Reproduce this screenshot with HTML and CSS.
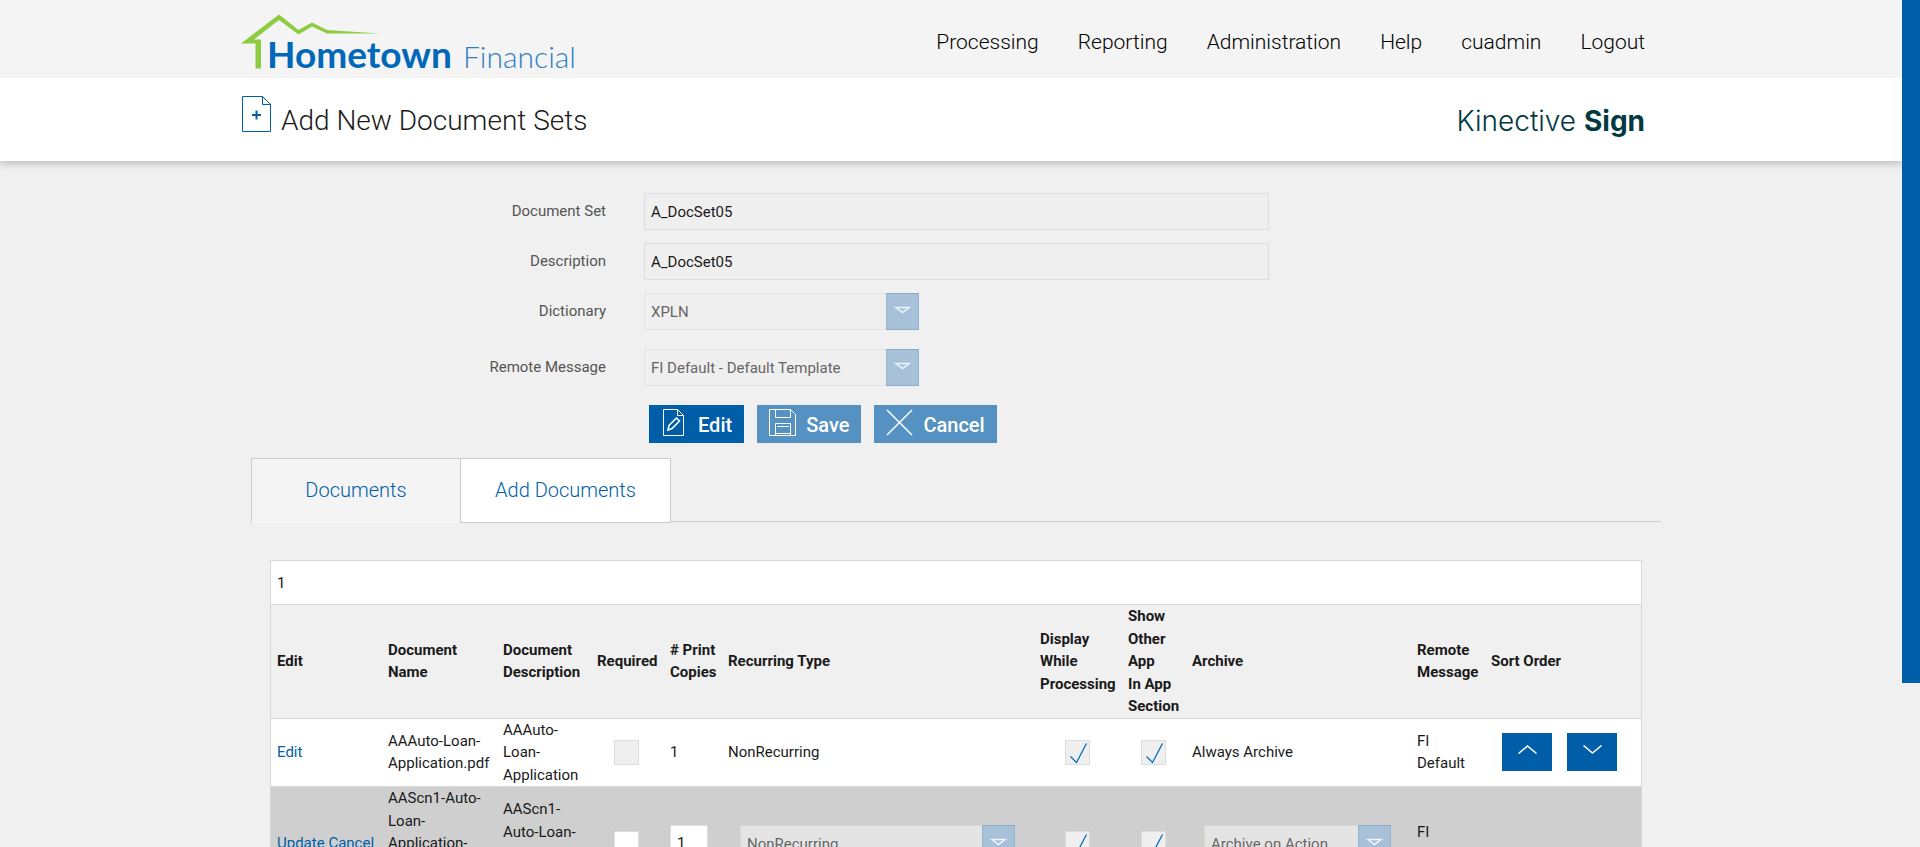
FILE: index.html
```html
<!DOCTYPE html>
<html lang="en">
<head>
<meta charset="utf-8">
<title>Add New Document Sets</title>
<link rel="stylesheet" href="styles.css">
</head>
<body>

<div class="page">

<header class="topbar">
  <div class="container topbar-inner">
    <a href="#" class="logo" aria-label="Hometown Financial">
      <svg width="340" height="69" viewBox="0 0 340 69">
        <path d="M0 34.500 L38 5.500 L57.500 21 L71 13.500 L86 21 L138 24.500 L86 24.500 L71 17.500 L57.500 25.500 L38 11 L13 30.500 L20 30.500 L20 59.500 L14.500 59.500 L14.500 34.500 Z" fill="#8dcb40"/>
        <text class="logo-main" x="26" y="59">Hometown</text>
        <text class="logo-sub" x="222" y="59">Financial</text>
      </svg>
    </a>
    <nav class="menu">
      <a href="#">Processing</a>
      <a href="#">Reporting</a>
      <a href="#">Administration</a>
      <a href="#">Help</a>
      <a href="#">cuadmin</a>
      <a href="#">Logout</a>
    </nav>
  </div>
</header>

<div class="titlebar">
  <div class="container titlebar-inner">
    <svg class="title-icon" width="30" height="37" viewBox="0 0 30 37" fill="none" stroke="#005ea8">
      <path d="M.5 .5 H20.500 L28.500 8.500 V35.500 H.5 Z M20.500 .5 V8.500 H28.500"/>
      <path d="M10 19 H19 M14.500 14.500 V23.500" stroke-width="2"/>
    </svg>
    <h1>Add New Document Sets</h1>
    <div class="brand">Kinective <b>Sign</b></div>
  </div>
</div>

<main class="container content">

  <form class="docset">
    <div class="row">
      <label for="docset">Document Set</label>
      <input type="text" id="docset" class="field wide" value="A_DocSet05" disabled>
    </div>
    <div class="row">
      <label for="description">Description</label>
      <input type="text" id="description" class="field wide" value="A_DocSet05" disabled>
    </div>
    <div class="row row-select">
      <label for="dictionary">Dictionary</label>
      <select id="dictionary" class="select" disabled><option>XPLN</option></select>
    </div>
    <div class="row row-select">
      <label for="remote">Remote Message</label>
      <select id="remote" class="select" disabled><option>FI Default - Default Template</option></select>
    </div>
    <div class="buttons">
      <button type="button" class="btn">
        <svg width="27" height="27" viewBox="-2 0 27 27" fill="none" stroke="#fff"><path d="M.5 .5 H14.500 L20.500 6.500 V26.500 H.5 Z M14.500 .5 V6.500 H20.500"/><path d="M5 21 L6 16.500 L13.500 9 L16.500 12 L9 19.500 Z" stroke-width="1.5"/></svg>
        Edit
      </button>
      <button type="button" class="btn" disabled>
        <svg width="27" height="27" viewBox="0 0 27 27" fill="none" stroke="#fff"><path d="M.5 .5 H21.500 L26.500 5.500 V26.500 H.5 Z M6.500 .5 V8.500 H21.500 V.5 M6.500 26.500 V14.500 H21.500 V26.500 M8.500 17.500 H19.500 M6.500 24.500 H21.500"/></svg>
        Save
      </button>
      <button type="button" class="btn" disabled>
        <svg width="27" height="27" viewBox="0 0 27 27" fill="none" stroke="#fff" stroke-width="1.5"><path d="M1 1 L26 26 M26 1 L1 26"/></svg>
        Cancel
      </button>
    </div>
  </form>

  <div class="tabs">
    <a href="#" class="tab current">Documents</a>
    <a href="#" class="tab">Add Documents</a>
  </div>

  <div class="grid">
    <div class="pager">1</div>
    <table>
      <colgroup>
        <col class="c-edit"><col class="c-name"><col class="c-desc"><col class="c-req"><col class="c-copies"><col>
        <col class="c-display"><col class="c-show"><col class="c-archive"><col class="c-remote"><col class="c-sort">
      </colgroup>
      <thead>
        <tr>
          <th>Edit</th>
          <th>Document Name</th>
          <th>Document Description</th>
          <th>Required</th>
          <th># Print Copies</th>
          <th>Recurring Type</th>
          <th>Display While Processing</th>
          <th>Show Other App<br>In App Section</th>
          <th>Archive</th>
          <th>Remote Message</th>
          <th>Sort Order</th>
        </tr>
      </thead>
      <tbody>
        <tr>
          <td><a href="#">Edit</a></td>
          <td>AAAuto-Loan-Application.pdf</td>
          <td>AAAuto-Loan-Application</td>
          <td class="mid"><input type="checkbox" aria-label="Required" disabled></td>
          <td>1</td>
          <td>NonRecurring</td>
          <td class="mid"><input type="checkbox" aria-label="Display While Processing" checked disabled></td>
          <td class="mid"><input type="checkbox" aria-label="Show Other App In App Section" checked disabled></td>
          <td>Always Archive</td>
          <td>FI Default</td>
          <td>
            <div class="sort">
              <button type="button" class="btn-sort" aria-label="Move up"><svg width="19" height="9" viewBox="0 0 19 9" fill="none" stroke="#fff" stroke-width="1.5"><path d="M.5 8.500 L9.500 1 L18.500 8.500"/></svg></button>
              <button type="button" class="btn-sort" aria-label="Move down"><svg width="19" height="9" viewBox="0 0 19 9" fill="none" stroke="#fff" stroke-width="1.5"><path d="M.5 .5 L9.500 8 L18.500 .5"/></svg></button>
            </div>
          </td>
        </tr>
        <tr class="editing">
          <td><a href="#">Update</a> <a href="#">Cancel</a></td>
          <td>AAScn1-Auto-Loan-Application-Screen-Test-1.pdf</td>
          <td>AAScn1-Auto-Loan-Application-Screen</td>
          <td class="mid"><input type="checkbox" aria-label="Required"></td>
          <td><input type="text" class="field copies" aria-label="Print copies" value="1"></td>
          <td><select class="select in-cell" aria-label="Recurring type" disabled><option>NonRecurring</option></select></td>
          <td class="mid"><input type="checkbox" aria-label="Display While Processing" checked disabled></td>
          <td class="mid"><input type="checkbox" aria-label="Show Other App In App Section" checked disabled></td>
          <td><select class="select in-cell archive" aria-label="Archive" disabled><option>Archive on Action</option></select></td>
          <td>FI Default</td>
          <td></td>
        </tr>
      </tbody>
    </table>
  </div>

</main>
</div>

<div class="scroll"><div class="scroll-thumb"></div></div>

</body>
</html>
```
FILE: styles.css
```css
* {
  box-sizing: border-box;
}

body {
  display: flex;
  height: 100vh;
  margin: 0;
  overflow: hidden;
  background: #f0f0f0;
  color: #1a1a1a;
  font: 15px/1.5 Roboto, sans-serif;
}

a {
  color: #005ea8;
  text-decoration: none;
}

.page {
  flex: 1;
  min-width: 0;
  overflow: hidden;
}

.container {
  max-width: 1420px;
  margin: 0 auto;
}

/* header */

.topbar {
  position: relative;
  z-index: 1;
  background: #f4f4f4;
}

.topbar-inner {
  display: flex;
  justify-content: space-between;
  align-items: center;
  height: 78px;
  padding-right: 16px;
}

.logo svg {
  display: block;
  margin-top: 9px;
}

.logo-main {
  font: bold 37px Lato, sans-serif;
  fill: #0067b9;
}

.logo-sub {
  font: 300 30px Lato, sans-serif;
  fill: #2f7fc1;
}

.menu {
  display: flex;
  gap: 39px;
  padding-top: 6px;
}

.menu a {
  color: #000;
  font-size: 21px;
  font-weight: 300;
  line-height: 28px;
}

.titlebar {
  background: #fff;
  box-shadow: 0 2px 8px rgba(0, 0, 0, .25);
}

.titlebar-inner {
  display: flex;
  align-items: center;
  height: 83px;
  padding: 2px 16px 0 0;
}

.title-icon {
  margin: 0 9px 12px 1px;
}

h1 {
  margin: 0;
  font-size: 28px;
  font-weight: 300;
  line-height: 36px;
}

.brand {
  margin-left: auto;
  color: #003a40;
  font: 300 28px/36px Inter, sans-serif;
}

.brand b {
  font-weight: 700;
}

/* form */

.content {
  padding-top: 32px;
}

.row {
  display: flex;
  align-items: center;
  margin-bottom: 13px;
}

.row-select {
  margin-bottom: 19px;
}

.row label {
  width: 365px;
  margin-right: 38px;
  color: #555;
  text-align: right;
}

.field {
  height: 37px;
  padding: 0 6px;
  border: 1px solid #ddd;
  background: #fff;
  color: #1a1a1a;
  font: inherit;
}

.field:disabled {
  background: #efefef;
}

.wide {
  width: 625px;
}

.select {
  appearance: none;
  width: 275px;
  height: 37px;
  padding: 1px 40px 0 6px;
  border: 1px solid #e3e3e3;
  border-right: 0;
  border-radius: 0;
  background: #efefef url("data:image/svg+xml,%3Csvg xmlns='http://www.w3.org/2000/svg' width='33' height='37'%3E%3Crect x='.5' y='.5' width='32' height='36' fill='%23a6c1d9' stroke='%2394b5cf'/%3E%3Cpath d='M10 14.500H23L16.500 19.500Z' fill='none' stroke='%23f0f5fa' stroke-width='1.500'/%3E%3C/svg%3E") no-repeat right top;
  background-origin: border-box;
  background-clip: border-box;
  border-color: rgba(0, 0, 0, .05);
  color: #666;
  font: inherit;
  opacity: 1;
}

.buttons {
  display: flex;
  gap: 13px;
  margin-left: 408px;
}

.btn {
  display: flex;
  align-items: center;
  gap: 10px;
  height: 38px;
  padding: 2px 12px 0;
  border: 0;
  background: #005ea8;
  color: #fff;
  font: 500 20px/28px Roboto, sans-serif;
}

.btn svg {
  margin-bottom: 6px;
}

.btn:disabled {
  background: #5591c1;
}

/* tabs */

.tabs {
  display: flex;
  height: 64px;
  margin: 15px 0 0 10px;
  border-bottom: 1px solid #ccc;
}

.tab {
  width: 211px;
  height: 65px;
  border: 1px solid #ccc;
  background: #fff;
  font-size: 20px;
  font-weight: 300;
  line-height: 62px;
  text-align: center;
}

.tab.current {
  width: 209px;
  border-right: 0;
  border-bottom-color: #f4f4f4;
  background: #f4f4f4;
}

/* documents table */

.grid {
  margin: 38px 19px 0 29px;
  border: 1px solid #d8d8d8;
}

.pager {
  height: 43px;
  padding: 11px 6px 0;
  background: #fff;
}

table {
  width: 100%;
  border-collapse: collapse;
  table-layout: fixed;
}

th, td {
  padding: 0 6px;
  border-top: 1px solid #d8d8d8;
  text-align: left;
}

td {
  background: #fff;
}

.editing td {
  background: #cfcfcf;
}

.mid {
  padding: 0 7px 0 5px;
  text-align: center;
}

.c-edit { width: 111px; }
.c-name { width: 115px; }
.c-desc { width: 94px; }
.c-req { width: 73px; }
.c-copies { width: 58px; }
.c-display { width: 88px; }
.c-show { width: 64px; }
.c-archive { width: 225px; }
.c-remote { width: 74px; }
.c-sort { width: 156px; }

input[type="checkbox"] {
  appearance: none;
  display: block;
  width: 25px;
  height: 25px;
  margin: 0 auto;
  border: 1px solid #ddd;
  background: #fff;
}

input[type="checkbox"]:disabled {
  background-color: #efefef;
}

input[type="checkbox"]:checked {
  background-image: url("data:image/svg+xml,%3Csvg xmlns='http://www.w3.org/2000/svg' width='23' height='23'%3E%3Cpath d='M4.500 15.500L10.500 21.500L20.500 2.500' fill='none' stroke='%23006bb3' stroke-width='1.300'/%3E%3C/svg%3E");
}

.copies {
  width: 38px;
}

.in-cell {
  display: block;
  margin-left: 12px;
  background-color: #e4e4e4;
}

.archive {
  width: 187px;
}

.sort {
  display: flex;
  gap: 15px;
  margin-left: 11px;
}

.btn-sort {
  display: flex;
  justify-content: center;
  width: 50px;
  height: 38px;
  padding: 12px 0 0;
  border: 0;
  background: #005ea8;
}

/* page scroll bar */

.scroll {
  display: flex;
  flex-direction: column;
  width: 18px;
}

.scroll::after {
  content: "";
  flex: 6;
}

.scroll-thumb {
  flex: 25;
  background: #005ea8;
}
```
